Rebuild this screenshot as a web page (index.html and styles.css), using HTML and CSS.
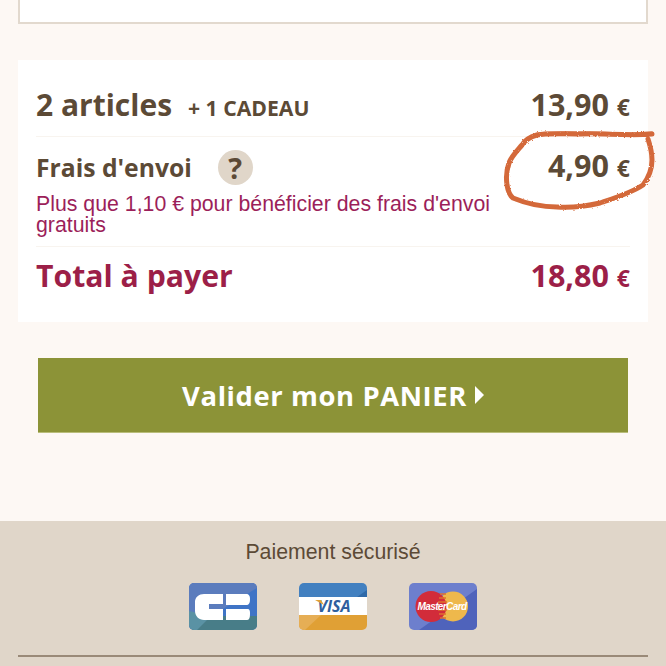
FILE: index.html
```html
<!DOCTYPE html>
<html lang="fr">
<head>
    <title>Panier</title>
    <link rel="stylesheet" href="styles.css">
</head>
<body>
    <div class="top-box"></div>

    <div class="summary">
        <div class="row row-articles">
            <div class="label">2 articles <span class="gift">+ 1 CADEAU</span></div>
            <div class="price">13,90 <span class="euro">€</span></div>
        </div>
        <div class="shipping">
            <div class="row row-shipping">
                <div class="label">Frais d'envoi <span class="help">?</span></div>
                <div class="price">4,90 <span class="euro">€</span></div>
            </div>
            <p class="notice">Plus que 1,10 € pour bénéficier des frais d'envoi gratuits</p>
        </div>
        <div class="row row-total">
            <div class="label">Total à payer</div>
            <div class="price">18,80 <span class="euro">€</span></div>
        </div>
        <svg class="scribble" width="160" height="90" viewBox="0 0 160 90" fill="none">
            <defs>
                <filter id="rough" x="-5%" y="-10%" width="110%" height="120%">
                    <feTurbulence type="fractalNoise" baseFrequency="0.6" numOctaves="2" seed="4"/>
                    <feDisplacementMap in="SourceGraphic" scale="2.500"/>
                </filter>
            </defs>
            <g filter="url(#rough)">
                <path class="scribble-wide" d="M155 9 C130 11 105 8 83 9 C65 9 50 8 40 10 C33 12 28 15 25 20 C19 27 14 32 12 38 C9 46 9 53 10 60 C11 66 12 70 16 73 C28 78 44 82 60 82 C75 83 90 81 103 78 C118 73 134 68 146 60 C152 52 155 44 155 35 C155 27 153 20 151 14"/>
                <path class="scribble-thin" d="M155 7 C128 10 100 7 80 7 C60 7 46 7 38 9 C31 11 25 17 22 23 C15 31 11 40 10 56 C10 64 11 71 18 75 C34 79 50 83 66 83 C84 83 100 80 110 76 C124 71 136 67 146 59"/>
            </g>
        </svg>
    </div>

    <a class="validate" href="#">Valider mon PANIER<span class="arrow"></span></a>

    <footer class="footer">
        <div class="secure">Paiement sécurisé</div>
        <div class="cards">
            <svg class="card" width="68" height="47" viewBox="0 0 68 47">
                <defs><clipPath id="clipCb"><rect width="68" height="47" rx="5"/></clipPath></defs>
                <g clip-path="url(#clipCb)">
                    <rect width="68" height="47" fill="#3f74c6"/>
                    <path d="M0 0H68V5L0 47Z" fill="#5b7cbd"/>
                    <path d="M0 47L20 33H68V47Z" fill="#487d88"/>
                    <path d="M0 47V28L22 33L8 47Z" fill="#5a92a4"/>
                    <path d="M6 19C6 14 10 11 15 11H34V21H20V26H34V37H15C10 37 6 33 6 28Z" fill="#fff"/>
                    <path d="M37 11H57C60 11 61 13 61 16C61 20 60 22 57 22H37Z" fill="#fff"/>
                    <path d="M37 26H58C61 26 61 28 61 31C61 35 60 37 58 37H37Z" fill="#fff"/>
                </g>
            </svg>
            <svg class="card" width="68" height="47" viewBox="0 0 68 47">
                <defs><clipPath id="clipVisa"><rect width="68" height="47" rx="5"/></clipPath></defs>
                <g clip-path="url(#clipVisa)">
                    <rect width="68" height="14" fill="#4280c0"/>
                    <path d="M58 14L68 7V14Z" fill="#2f69a8"/>
                    <rect y="14" width="68" height="18" fill="#fff"/>
                    <rect y="32" width="68" height="15" fill="#e0a035"/>
                    <path d="M0 47V32H22L6 47Z" fill="#e6ae55"/>
                    <text class="visa-text" x="35" y="29">VISA</text>
                    <path d="M16 17H22L25 22Z" fill="#e0a035"/>
                </g>
            </svg>
            <svg class="card" width="68" height="47" viewBox="0 0 68 47">
                <defs><clipPath id="clipMc"><rect width="68" height="47" rx="5"/></clipPath></defs>
                <g clip-path="url(#clipMc)">
                    <rect width="68" height="47" fill="#6d7fcd"/>
                    <path d="M68 6V47H10Z" fill="#4f63bb"/>
                    <circle cx="44" cy="23.500" r="15" fill="#eeb84c"/>
                    <circle cx="22" cy="23.500" r="15.500" fill="#d22c3a"/>
                    <path d="M31 11H37M30 15H37M29 19H38M29 27H38M30 31H37M31 35H37" stroke="#e0702f" stroke-width="1.300"/>
                    <text class="mc-text" x="33" y="27">MasterCard</text>
                </g>
            </svg>
        </div>
        <div class="footer-line"></div>
    </footer>
</body>
</html>
```

FILE: styles.css
```css
html, body { height: 666px; overflow: hidden; }
body { margin: 0; background: #fdf8f4; color: #5c4a36; font-family: "Open Sans", sans-serif; font-weight: bold; }

.top-box { height: 24px; margin: 0 18px; background: #fff; border: 2px solid #e2d9ce; border-top: 0; box-sizing: border-box; }

.summary { position: relative; margin: 36px 18px 0; padding: 0 18px; height: 262px; box-sizing: border-box; background: #fff; }
.row { display: flex; justify-content: space-between; align-items: center; }
.row-articles { height: 77px; padding-top: 12px; box-sizing: border-box; border-bottom: 1px solid #f8f4ef; }
.shipping { height: 110px; box-sizing: border-box; border-bottom: 1px solid #f8f4ef; }
.row-shipping { height: 56px; padding-top: 4px; box-sizing: border-box; }
.row-shipping .price { margin-bottom: 4px; }
.row-total { height: 56px; color: #9c1f48; }

.label { font-size: 30px; }
.row-shipping .label { font-size: 24.700px; display: flex; align-items: center; }
.row-total .label { font-size: 30.200px; }
.gift { font-size: 21.200px; margin-left: 8px; }
.help { display: inline-block; width: 35px; height: 35px; margin-left: 26px; border-radius: 50%; background: #e0d6c9; font-size: 29px; line-height: 35px; text-align: center; }
.price { font-size: 30.500px; }
.euro { font-size: 23px; }

.notice { margin: 1px 0 0; max-width: 470px; font-family: "Liberation Sans", sans-serif; font-weight: normal; font-size: 21.300px; line-height: 21px; color: #9c1f5a; }

.scribble { position: absolute; right: -9px; top: 65px; }
.scribble path { stroke: #d4693a; stroke-linecap: round; }
.scribble-wide { stroke-width: 5; }
.scribble-thin { stroke-width: 2; opacity: 0.5; }

.validate { display: flex; justify-content: center; align-items: center; height: 75px; margin: 36px 38px 0; background: #8c9337; border-bottom: 1px solid #b9bd7a; box-sizing: border-box; color: #fff; font-size: 27.400px; letter-spacing: 0.6px; text-decoration: none; }
.arrow { width: 0; height: 0; margin-left: 8px; border-left: 9px solid #fff; border-top: 9px solid transparent; border-bottom: 9px solid transparent; }

.footer { margin-top: 88px; padding: 18px 18px 0; background: #e0d6c9; height: 145px; box-sizing: border-box; overflow: hidden; }
.secure { height: 27px; font-family: "Liberation Sans", sans-serif; font-weight: normal; font-size: 21.300px; line-height: 27px; text-align: center; color: #5c4a36; }
.cards { display: flex; justify-content: center; gap: 42px; margin-top: 17px; }
.card { display: block; }
.visa-text { font-family: "Open Sans", sans-serif; font-size: 16px; font-weight: bold; font-style: italic; fill: #2f5f9e; text-anchor: middle; }
.mc-text { font-family: "Liberation Sans", sans-serif; font-size: 10px; font-weight: bold; font-style: italic; fill: #fff; text-anchor: middle; letter-spacing: -0.6px; }
.footer-line { height: 2px; margin-top: 25px; background: #9a8a78; }
```
